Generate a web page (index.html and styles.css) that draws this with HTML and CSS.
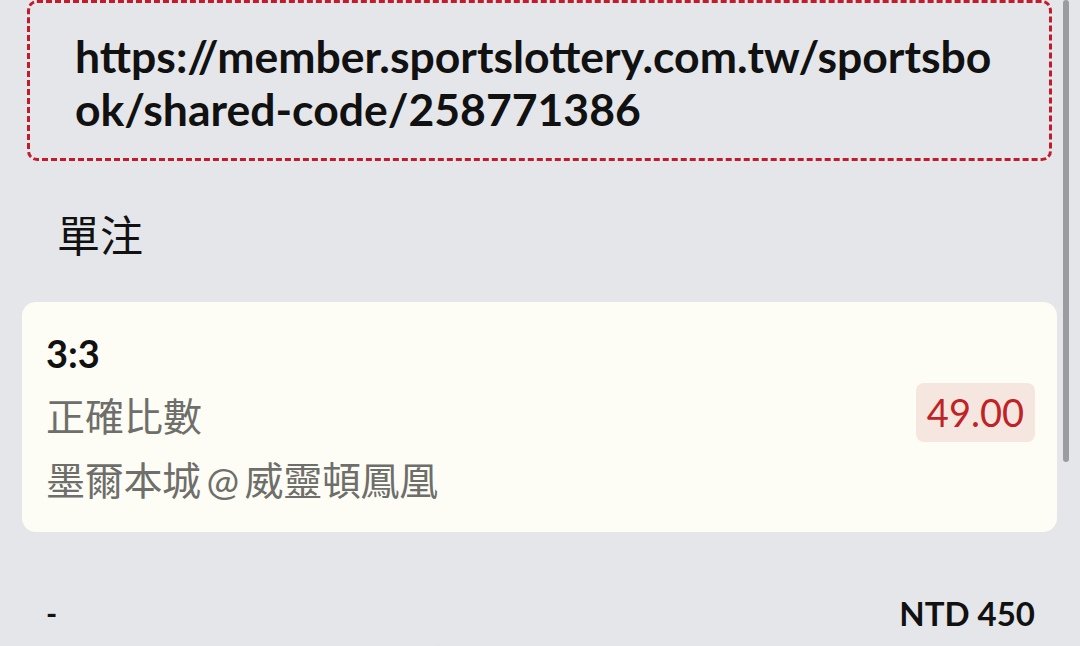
FILE: index.html
```html
<!DOCTYPE html>
<html lang="zh-Hant">
<head>
<meta charset="utf-8">
<link rel="stylesheet" href="styles.css">
</head>
<body>
<div class="screen">
  <div class="link-box">https://member.sportslottery.com.tw/sportsbook/shared-code/258771386</div>
  <div class="section-title">單注</div>
  <div class="bet-card">
    <div class="bet-info">
      <div class="bet-pick">3:3</div>
      <div class="bet-market">正確比數</div>
      <div class="bet-match">墨爾本城 @ 威靈頓鳳凰</div>
    </div>
    <div class="odds">49.00</div>
  </div>
  <div class="summary">
    <div class="summary-row">
      <span class="dash">-</span>
      <span class="amount">NTD 450</span>
    </div>
    <div class="league">足球 - 澳洲職業足球聯賽</div>
  </div>
  <div class="scrollbar"></div>
</div>
</body>
</html>
```
FILE: styles.css
```css
html, body {
  margin: 0;
  padding: 0;
  background: #e5e6e9;
  overflow: hidden;
}
.screen {
  position: relative;
  width: 1080px;
  height: 646px;
  overflow: hidden;
  font-family: "Lato", "Noto Sans CJK TC", sans-serif;
  color: #111;
}
.link-box {
  margin: 0 28px 0 27px;
  padding: 26px 51px 23px 45px;
  border: 3px dashed #c21b2c;
  border-radius: 10px;
  font-weight: 700;
  font-size: 44.5px;
  line-height: 53px;
  word-break: break-all;
}
.section-title {
  margin: 42px 0 0 57px;
  font-family: "Noto Sans CJK TC", sans-serif;
  font-size: 43px;
  line-height: 60px;
  color: #111;
}
.bet-card {
  margin: 39px 23px 0 22px;
  padding: 20px 22px 20px 24px;
  background: #fdfdf5;
  border-radius: 14px;
  display: flex;
  align-items: center;
  justify-content: space-between;
}
.bet-info {
  display: flex;
  flex-direction: column;
}
.bet-pick {
  font-weight: 700;
  font-size: 38px;
  line-height: 62px;
}
.bet-market, .bet-match {
  font-family: "Lato", "Noto Sans CJK TC", sans-serif;
  font-size: 39px;
  line-height: 64px;
  color: #6e6e6b;
}
.bet-match {
  word-spacing: -4px;
  letter-spacing: -0.3px;
}
.odds {
  background: #f6e6e0;
  color: #bf2325;
  font-size: 38px;
  line-height: 59px;
  padding: 0 11px;
  border-radius: 8px;
  margin-bottom: 10px;
}
.summary {
  margin: 59px 45px 0 46px;
}
.summary-row {
  display: flex;
  justify-content: space-between;
  align-items: center;
  height: 44px;
}
.dash {
  font-weight: 700;
  font-size: 30px;
}
.amount {
  font-weight: 700;
  font-size: 33px;
}
.league {
  font-family: "Noto Sans CJK TC", sans-serif;
  font-size: 38px;
  line-height: 50px;
  color: #3f8a3a;
  margin-top: 2px;
}
.scrollbar {
  position: absolute;
  top: 0;
  left: 1063px;
  width: 6px;
  height: 462px;
  background: #9b9ca0;
  border-radius: 3px;
}
```
